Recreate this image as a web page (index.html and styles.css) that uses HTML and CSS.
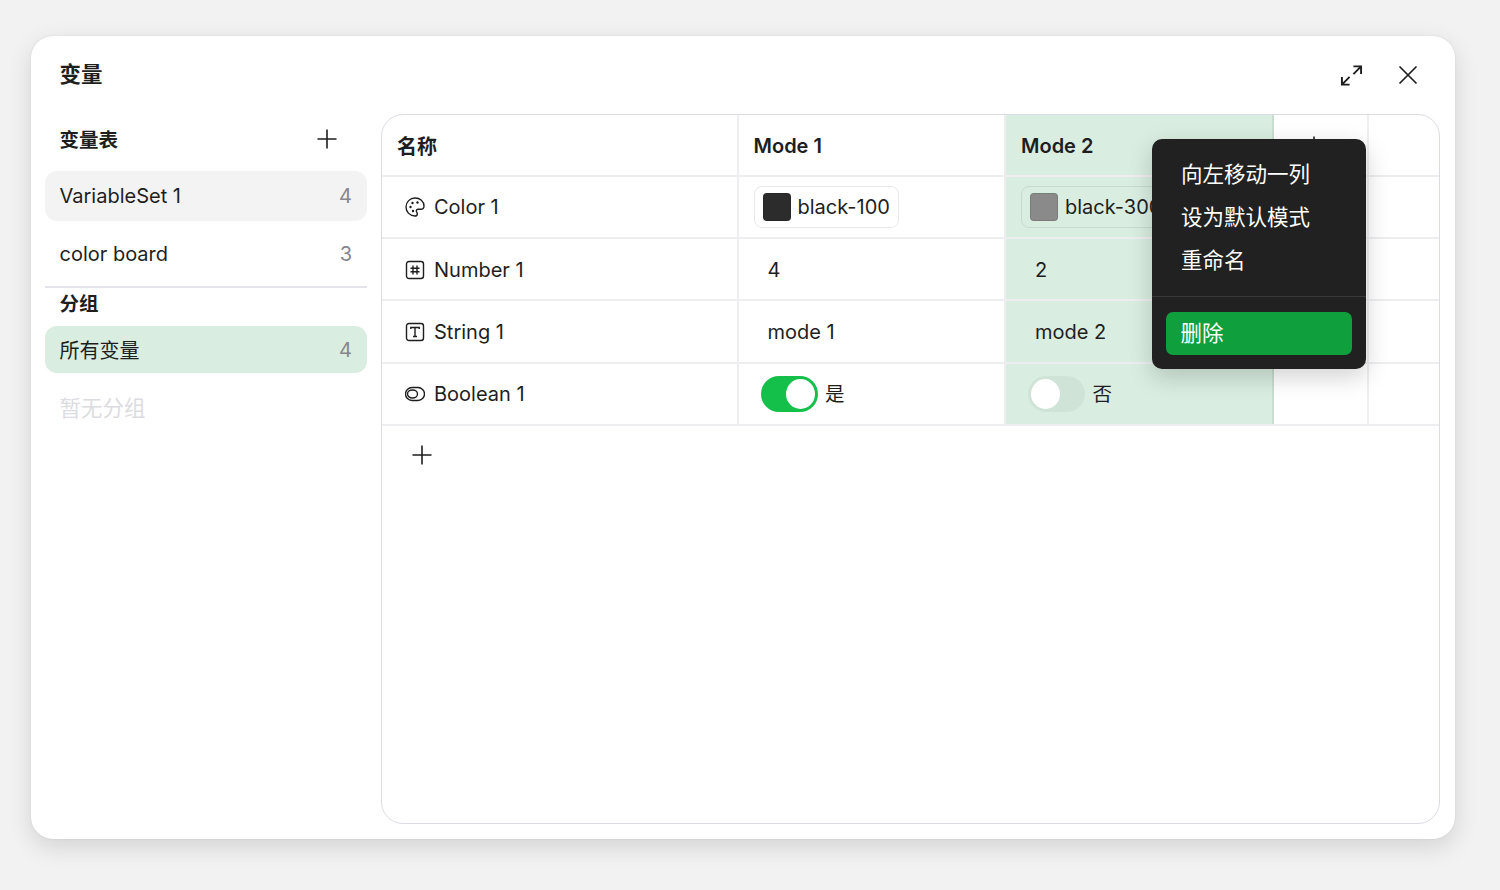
FILE: index.html
```html
<!DOCTYPE html>
<html lang="zh">
<head>
<meta charset="utf-8">
<title>变量</title>
<link rel="stylesheet" href="styles.css">
</head>
<body>
<section class="dialog">
  <header class="dialog-head">
    <h1 class="dialog-title">变量</h1>
    <div class="dialog-actions">
      <svg class="icon-expand" viewBox="0 0 24 24"><path d="M14 2.500h8V10.500M22 2.500L14 10.500M2 13.500v8h8M2 21.500l8-8"/></svg>
      <svg class="icon-close" viewBox="0 0 20 20"><path d="M1.500 1.500l17 17M18.500 1.500l-17 17"/></svg>
    </div>
  </header>
  <div class="dialog-body">
    <aside class="sidebar">
      <div class="side-head">
        <span class="side-title">变量表</span>
        <svg class="icon-plus side-plus" viewBox="0 0 20 20"><path d="M10 .5v19M.5 10h19"/></svg>
      </div>
      <div class="side-item is-grey"><span>VariableSet 1</span><span class="count">4</span></div>
      <div class="side-item tall"><span>color board</span><span class="count">3</span></div>
      <div class="side-divider"></div>
      <div class="group-title">分组</div>
      <div class="side-item is-green"><span>所有变量</span><span class="count">4</span></div>
      <div class="side-empty">暂无分组</div>
    </aside>
    <main class="panel">
      <div class="row head">
        <div class="cell name">名称</div>
        <div class="cell mode1">Mode 1</div>
        <div class="cell mode2">Mode 2</div>
        <div class="cell addcol"><svg class="icon-plus" viewBox="0 0 20 20"><path d="M10 .5v19M.5 10h19"/></svg></div>
        <div class="cell rest"></div>
      </div>
      <div class="row">
        <div class="cell name"><svg class="type-icon" viewBox="0 0 20 20"><path d="M10 1C5 1 1 5 1 10s4 9 9 9c1.500 0 2.300-1 2.300-2.100 0-.6-.2-1-.5-1.500-.3-.4-.5-.8-.5-1.300 0-1.100.9-1.900 2-1.900h2.300c2.100 0 3.400-1.300 3.400-3.300C19 4.200 15 1 10 1z"/><circle class="dot" cx="5.500" cy="10" r="1.200"/><circle class="dot" cx="7.500" cy="6" r="1.200"/><circle class="dot" cx="12.500" cy="5.500" r="1.200"/><circle class="dot" cx="8" cy="14" r="1.200"/></svg>Color 1</div>
        <div class="cell mode1"><div class="chip"><i class="swatch dark"></i>black-100</div></div>
        <div class="cell mode2"><div class="chip on-green"><i class="swatch grey"></i>black-300</div></div>
        <div class="cell addcol"></div>
        <div class="cell rest"></div>
      </div>
      <div class="row">
        <div class="cell name"><svg class="type-icon" viewBox="0 0 20 20"><rect x="1.500" y="1.500" width="17" height="17" rx="2.500"/><path d="M8 5.500v9M12 5.500v9M5.500 8.200h9M5.500 11.800h9"/></svg>Number 1</div>
        <div class="cell mode1 val">4</div>
        <div class="cell mode2 val">2</div>
        <div class="cell addcol"></div>
        <div class="cell rest"></div>
      </div>
      <div class="row">
        <div class="cell name"><svg class="type-icon" viewBox="0 0 20 20"><rect x="1.500" y="1.500" width="17" height="17" rx="2.500"/><path d="M5.800 7V5.500h8.400V7M10 5.500v9M8 14.500h4"/></svg>String 1</div>
        <div class="cell mode1 val">mode 1</div>
        <div class="cell mode2 val">mode 2</div>
        <div class="cell addcol"></div>
        <div class="cell rest"></div>
      </div>
      <div class="row">
        <div class="cell name"><svg class="type-icon" viewBox="0 0 20 20"><rect x=".5" y="3.500" width="19" height="13" rx="6.500"/><ellipse cx="7.500" cy="10" rx="5" ry="4"/></svg>Boolean 1</div>
        <div class="cell mode1"><span class="toggle on"><i></i></span><span class="toggle-label">是</span></div>
        <div class="cell mode2 off-cell"><span class="toggle"><i></i></span><span class="toggle-label">否</span></div>
        <div class="cell addcol"></div>
        <div class="cell rest"></div>
      </div>
      <div class="add-row"><svg class="icon-plus" viewBox="0 0 20 20"><path d="M10 .5v19M.5 10h19"/></svg></div>
    </main>
  </div>
  <div class="menu">
    <div class="menu-list">
      <div class="menu-item">向左移动一列</div>
      <div class="menu-item">设为默认模式</div>
      <div class="menu-item">重命名</div>
    </div>
    <div class="menu-foot"><div class="menu-danger">删除</div></div>
  </div>
</section>
</body>
</html>
```
FILE: styles.css
```css
* { box-sizing: border-box; }
html, body { height: 100%; }
body {
  margin: 0;
  padding: 36px 45px 51px 31px;
  background: #f2f2f3;
  color: #1e1e1e;
  font-family: Inter, "Noto Sans CJK SC", sans-serif;
  font-size: 20px;
  overflow: hidden;
}
.dialog {
  position: relative;
  height: 803px;
  background: #fff;
  border-radius: 22px;
  box-shadow: 0 8px 24px rgba(0, 0, 0, .13), 0 0 2px rgba(0, 0, 0, .1);
  display: flex;
  flex-direction: column;
}
.dialog-head {
  height: 78px;
  padding: 0 37px 1px 28.500px;
  display: flex;
  align-items: center;
  justify-content: space-between;
}
.dialog-title { margin: 0; font-size: 21.500px; font-weight: 700; line-height: 1; }
.dialog-actions { display: flex; align-items: center; gap: 35.500px; padding-top: 1px; }
svg { fill: none; stroke: #1e1e1e; flex: none; }
.icon-expand { width: 23px; height: 23px; stroke-width: 2; }
.icon-close { width: 20px; height: 20px; stroke-width: 1.700; }
.icon-plus { width: 20px; height: 20px; stroke-width: 1.600; }
.dialog-body { flex: 1; display: flex; padding: 0 15px 15px 14px; gap: 14px; min-height: 0; }
.sidebar { width: 322px; flex: none; display: flex; flex-direction: column; }
.side-head {
  height: 57px;
  padding: 0 30px 8px 14.500px;
  display: flex;
  align-items: center;
  justify-content: space-between;
}
.side-title, .group-title { font-size: 19.500px; font-weight: 700; }
.side-item {
  display: flex;
  align-items: center;
  justify-content: space-between;
  height: 50px;
  padding: 0 15px 0 14.500px;
  border-radius: 12px;
}
.side-item.tall { height: 65px; }
.is-grey { background: #f3f3f3; }
.is-green { background: #d9ede0; height: 47px; }
.count { color: #85858f; }
.side-divider { height: 1.500px; background: #e4e4ea; }
.group-title { height: 38.500px; padding-left: 14.500px; line-height: 32px; }
.side-empty { margin-top: 16px; padding-left: 14.500px; font-size: 21.500px; color: #dcdce0; line-height: 38px; }
.panel {
  flex: 1;
  min-width: 0;
  border: 1.500px solid #dcdce4;
  border-radius: 22px;
  overflow: hidden;
}
.row { display: flex; height: 62.400px; border-bottom: 2px solid #eeeef1; }
.row.head { height: 61.500px; padding-top: 1px; font-weight: 600; }
.row.head .cell { height: calc(100% + 1px); margin-top: -1px; padding-top: 2px; }
.cell { display: flex; align-items: center; height: 100%; flex: none; border-right: 2px solid #eeeef1; }
.name { width: 356.500px; padding-left: 15px; }
.mode1 { width: 267.500px; padding-left: 15px; }
.mode2 { width: 268px; padding-left: 15px; background: #d9ede0; border-right-color: #c9ddd0; }
.addcol { width: 94.500px; padding-left: 30px; }
.rest { flex: 1; border-right: 0; }
.row:not(.head) .name { padding-left: 23px; padding-top: 1px; }
.val { padding-left: 29px; padding-top: 1px; }
.type-icon { width: 20px; height: 20px; margin-right: 9px; stroke-width: 1.400; }
.dot { fill: #1e1e1e; stroke: none; }
.chip {
  display: flex;
  align-items: center;
  height: 42px;
  padding: 0 8px;
  gap: 7px;
  border: 1px solid #e8e8ec;
  border-radius: 8px;
  background: #fff;
  white-space: nowrap;
}
.chip.on-green { background: transparent; border-color: #c7dbce; }
.swatch { display: block; width: 28px; height: 28px; border-radius: 4px; border: 1px solid rgba(0, 0, 0, .1); }
.dark { background: #2c2c2c; }
.grey { background: #8a8a8a; }
.toggle {
  display: block;
  width: 57px;
  height: 36px;
  margin-left: 7px;
  padding: 3px;
  border-radius: 18px;
  background: rgba(0, 0, 0, .04);
}
.toggle i { display: block; width: 29px; height: 30px; border-radius: 50%; background: #fff; }
.toggle.on { background: #14c04a; }
.toggle.on i { margin-left: 22px; }
.toggle-label { margin-left: 7.500px; font-size: 19.500px; line-height: 36px; padding-top: 1px; }
.add-row { padding: 19px 0 0 30px; }
.menu {
  position: absolute;
  left: 1121px;
  top: 103px;
  width: 214px;
  height: 230px;
  background: #212121;
  border-radius: 10px;
  color: #fff;
  box-shadow: 0 8px 24px rgba(0, 0, 0, .18);
}
.menu-list { height: 158px; padding-top: 14px; border-bottom: 1px solid #3a3a3a; }
.menu-item { height: 43px; line-height: 42px; padding-left: 29px; font-size: 21.500px; }
.menu-foot { padding: 15px 14px; }
.menu-danger { height: 43px; line-height: 43px; padding-left: 14.500px; border-radius: 7px; background: #0f9f3d; font-size: 21.500px; }
```
